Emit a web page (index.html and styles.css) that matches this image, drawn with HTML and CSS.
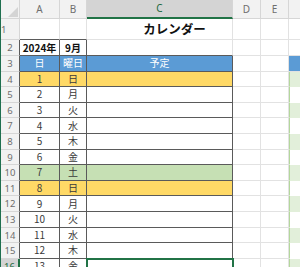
FILE: index.html
```html
<!DOCTYPE html>
<html lang="ja">
<head>
<meta charset="utf-8">
<title>カレンダー</title>
<link rel="stylesheet" href="styles.css">
</head>
<body>
<div class="sheet">
  <div class="row head">
    <div class="cell corner"><svg width="18" height="18" viewBox="0 0 18 18"><polygon points="7,17 17,17 17,7" fill="#d4d4d4"/></svg></div>
    <div class="cell hd">A</div>
    <div class="cell hd">B</div>
    <div class="cell hd on">C</div>
    <div class="cell hd">D</div>
    <div class="cell hd">E</div>
    <div class="cell hd last"></div>
  </div>
  <div class="row r1">
    <div class="cell rh">1</div>
    <div class="cell tb"></div>
    <div class="cell tb"><span class="title">カレンダー</span></div>
    <div class="cell"></div>
    <div class="cell"></div>
    <div class="cell"></div>
    <div class="cell last"></div>
  </div>
  <div class="row">
    <div class="cell rh tl">2</div>
    <div class="cell t b">2024年</div>
    <div class="cell t b">9月</div>
    <div class="cell tb"></div>
    <div class="cell"></div>
    <div class="cell"></div>
    <div class="cell last"></div>
  </div>
  <div class="row">
    <div class="cell rh tl">3</div>
    <div class="cell t blue">日</div>
    <div class="cell t blue">曜日</div>
    <div class="cell t blue">予定</div>
    <div class="cell"></div>
    <div class="cell"></div>
    <div class="cell last blue"></div>
  </div>
  <div class="row">
    <div class="cell rh tl">4</div>
    <div class="cell t yel">1</div>
    <div class="cell t yel">日</div>
    <div class="cell t yel"></div>
    <div class="cell"></div>
    <div class="cell"></div>
    <div class="cell last band"></div>
  </div>
  <div class="row">
    <div class="cell rh tl">5</div>
    <div class="cell t">2</div>
    <div class="cell t">月</div>
    <div class="cell t"></div>
    <div class="cell"></div>
    <div class="cell"></div>
    <div class="cell last plain"></div>
  </div>
  <div class="row">
    <div class="cell rh tl">6</div>
    <div class="cell t">3</div>
    <div class="cell t">火</div>
    <div class="cell t"></div>
    <div class="cell"></div>
    <div class="cell"></div>
    <div class="cell last band"></div>
  </div>
  <div class="row">
    <div class="cell rh tl">7</div>
    <div class="cell t">4</div>
    <div class="cell t">水</div>
    <div class="cell t"></div>
    <div class="cell"></div>
    <div class="cell"></div>
    <div class="cell last plain"></div>
  </div>
  <div class="row">
    <div class="cell rh tl">8</div>
    <div class="cell t">5</div>
    <div class="cell t">木</div>
    <div class="cell t"></div>
    <div class="cell"></div>
    <div class="cell"></div>
    <div class="cell last band"></div>
  </div>
  <div class="row">
    <div class="cell rh tl">9</div>
    <div class="cell t">6</div>
    <div class="cell t">金</div>
    <div class="cell t"></div>
    <div class="cell"></div>
    <div class="cell"></div>
    <div class="cell last plain"></div>
  </div>
  <div class="row">
    <div class="cell rh tl">10</div>
    <div class="cell t grn">7</div>
    <div class="cell t grn">土</div>
    <div class="cell t grn"></div>
    <div class="cell"></div>
    <div class="cell"></div>
    <div class="cell last band"></div>
  </div>
  <div class="row">
    <div class="cell rh tl">11</div>
    <div class="cell t yel">8</div>
    <div class="cell t yel">日</div>
    <div class="cell t yel"></div>
    <div class="cell"></div>
    <div class="cell"></div>
    <div class="cell last plain"></div>
  </div>
  <div class="row">
    <div class="cell rh tl">12</div>
    <div class="cell t">9</div>
    <div class="cell t">月</div>
    <div class="cell t"></div>
    <div class="cell"></div>
    <div class="cell"></div>
    <div class="cell last band"></div>
  </div>
  <div class="row">
    <div class="cell rh tl">13</div>
    <div class="cell t">10</div>
    <div class="cell t">火</div>
    <div class="cell t"></div>
    <div class="cell"></div>
    <div class="cell"></div>
    <div class="cell last plain"></div>
  </div>
  <div class="row">
    <div class="cell rh tl">14</div>
    <div class="cell t">11</div>
    <div class="cell t">水</div>
    <div class="cell t"></div>
    <div class="cell"></div>
    <div class="cell"></div>
    <div class="cell last band"></div>
  </div>
  <div class="row">
    <div class="cell rh tl">15</div>
    <div class="cell t">12</div>
    <div class="cell t">木</div>
    <div class="cell t"></div>
    <div class="cell"></div>
    <div class="cell"></div>
    <div class="cell last plain"></div>
  </div>
  <div class="row">
    <div class="cell rh on">16</div>
    <div class="cell t">13</div>
    <div class="cell t">金</div>
    <div class="cell t sel"></div>
    <div class="cell"></div>
    <div class="cell"></div>
    <div class="cell last band"></div>
  </div>
</div>
</body>
</html>
```
FILE: styles.css
```css
html, body {
  margin: 0;
  padding: 0;
  background: #fff;
  overflow: hidden;
}

.sheet {
  width: 300px;
  height: 267px;
  box-sizing: border-box;
  border-left: 1px solid #1f6f4f;
  overflow: hidden;
  font-family: "Noto Sans CJK JP", "Noto Sans", sans-serif;
  font-size: 10px;
  color: #3a3a3a;
}

/* one spreadsheet row: row header + columns A..F */
.row {
  display: grid;
  grid-template-columns: 19px 40px 27px 146px 28px 28px 1fr;
  height: 15.6px;
}

.row.head {
  height: 19px;
}

.row.r1 {
  height: 21.4px;
}

.cell {
  box-sizing: border-box;
  border-right: 1px solid #e2e2e2;
  border-bottom: 1px solid #e2e2e2;
  display: flex;
  align-items: center;
  justify-content: center;
  white-space: nowrap;
  line-height: 1;
  min-width: 0;
}

.cell.last {
  border-right: none;
}

/* column and row headers */
.hd,
.rh,
.corner {
  background: #f2f2f2;
  color: #6e6e6e;
  font-family: "Noto Sans", "Open Sans", sans-serif;
  font-size: 10px;
  border-right-color: #d6d6d6;
  border-bottom-color: #d6d6d6;
}

.corner {
  align-items: flex-end;
  justify-content: flex-end;
}

.corner svg {
  display: block;
}

.hd {
  padding-bottom: 1px;
}

.hd.on {
  background: #d4d4d4;
  color: #1d6b40;
  border-bottom: 2px solid #217346;
}

.rh {
  font-size: 9.5px;
  padding-top: 1px;
}

.rh.tl {
  border-right-color: #5a5a5a;
}

.rh.on {
  background: #d4d4d4;
  color: #1d6b40;
  border-right: 2px solid #217346;
}

/* title spread across B1:E1 */
.r1 .cell {
  justify-content: flex-start;
  overflow: visible;
}

.title {
  position: relative;
  z-index: 1;
  flex: none;
  width: 229px;
  text-align: center;
  font-size: 12.5px;
  font-weight: bold;
  color: #111;
  padding-top: 1px;
}

/* calendar table */
.t {
  border-right-color: #5a5a5a;
  border-bottom-color: #5a5a5a;
}

.tb {
  border-bottom-color: #5a5a5a;
}

.b {
  font-weight: bold;
  color: #111;
}

.blue {
  background: #5b9bd5;
  color: #fff;
}

.yel {
  background: #ffd966;
}

.grn {
  background: #c6e0b4;
}

/* banded table in column F */
.band {
  background: #e2efda;
  border-left: 1px solid #b4d79c;
  border-bottom-color: #e2efda;
}

.plain {
  border-left: 1px solid #b4d79c;
  border-bottom-color: #fff;
}

/* active cell */
.sel {
  outline: 2px solid #217346;
  outline-offset: -1px;
}
```
